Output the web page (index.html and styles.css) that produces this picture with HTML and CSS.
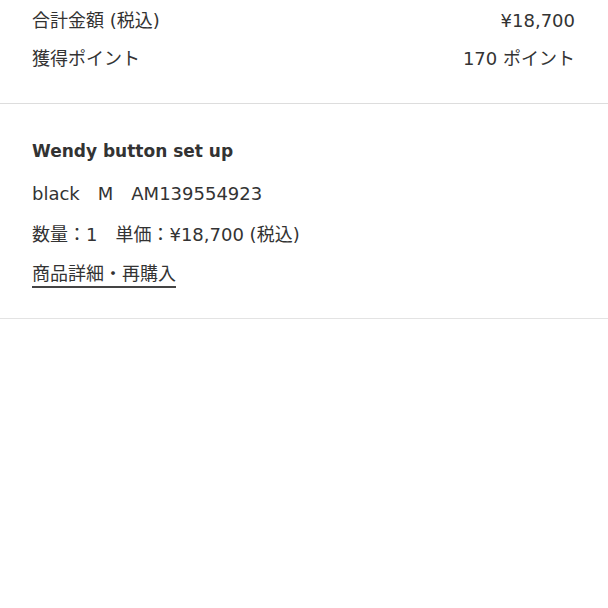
FILE: index.html
```html
<!DOCTYPE html>
<html lang="ja">
<head>
    <meta charset="UTF-8">
    <meta name="viewport" content="width=device-width, initial-scale=1.0">
    <title>注文詳細</title>
    <link rel="stylesheet" href="styles.css">
</head>
<body>
    <!-- Totals -->
    <div class="summary">
        <div class="summary-row">
            <span>合計金額 (税込)</span>
            <span>¥18,700</span>
        </div>
        <div class="summary-row">
            <span>獲得ポイント</span>
            <span>170 ポイント</span>
        </div>
    </div>

    <!-- Item -->
    <div class="item">
        <h2 class="item-name">Wendy button set up</h2>
        <p class="item-spec">black&emsp;M&emsp;AM139554923</p>
        <p class="item-price">数量：1&emsp;単価：¥18,700 (税込)</p>
        <a class="item-link" href="#">商品詳細・再購入</a>
    </div>
</body>
</html>
```

FILE: styles.css
```css
body {
    margin: 0;
    padding: 0;
    background: #fff;
    color: #333;
    font-family: "DejaVu Sans", "Noto Sans CJK JP", sans-serif;
    font-size: 18px;
}

/* Totals section */
.summary {
    padding: 2px 33px 25px 32px;
    border-bottom: 1px solid #ddd;
}

.summary-row {
    display: flex;
    justify-content: space-between;
    line-height: 38px;
}

/* Item section */
.item {
    padding: 33px 32px 30px;
    border-bottom: 1px solid #e3e3e3;
}

.item-name {
    margin: 0;
    font-size: 17px;
    font-weight: bold;
    line-height: 28px;
}

.item-spec {
    margin: 9px 0 0;
    line-height: 40px;
    word-spacing: 2px;
}

.item-price {
    margin: 1px 0 0;
    line-height: 40px;
}

.item-link {
    display: inline-block;
    margin-top: 7px;
    color: #333;
    text-decoration: none;
    line-height: 24px;
    border-bottom: 2px solid #444;
}
```
